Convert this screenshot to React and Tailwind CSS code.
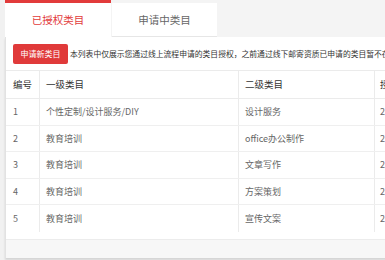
const ROWS = [
  { id: 1, first: '个性定制/设计服务/DIY', second: '设计服务', date: '2019-03-12 10:21:08' },
  { id: 2, first: '教育培训', second: 'office办公制作', date: '2019-03-12 10:21:08' },
  { id: 3, first: '教育培训', second: '文章写作', date: '2019-03-12 10:21:08' },
  { id: 4, first: '教育培训', second: '方案策划', date: '2019-03-12 10:21:08' },
  { id: 5, first: '教育培训', second: '宣传文案', date: '2019-03-12 10:21:08' },
];

const GRID = 'grid grid-cols-[34px_199px_136px_160px]';

export default function App() {
  return (
    <div className="w-[385px] h-[260px] overflow-hidden bg-[#f1f1f1] pl-[5px] font-['Noto_Sans_CJK_SC','Liberation_Sans',sans-serif]">
      {/* Tabs */}
      <div className="flex h-[37px] bg-[#f4f4f4]">
        <div className="w-[106px] bg-white border-t-[3px] border-[#e23b3b] text-[#e23b3b] text-[10.5px] flex items-center justify-center">
          已授权类目
        </div>
        <div className="ml-[1px] mt-[3px] w-[105px] bg-white border-b border-[#e6e6e6] text-[#666] text-[10.5px] flex items-center justify-center">
          申请中类目
        </div>
      </div>

      {/* Panel */}
      <div className="w-[420px] bg-white border-l border-[#e2e2e2] shadow-[0_2px_2px_rgba(0,0,0,0.12)]">
        <div className="flex items-center gap-[2px] pl-[7px] pt-[7px]">
          <button className="w-[55px] h-[20px] bg-[#e03a3a] text-white text-[8px] rounded-[2px] shrink-0">
            申请新类目
          </button>
          <p className="text-[7.8px] text-[#333] whitespace-nowrap">
            本列表中仅展示您通过线上流程申请的类目授权，之前通过线下邮寄资质已申请的类目暂不在此展示。
          </p>
        </div>

        {/* Table */}
        <div className="mt-[6px] border-t border-[#ebebeb]">
          <div className={`${GRID} h-[28px] border-b border-[#ebebeb] text-[9.5px] text-[#333]`}>
            <div className="flex items-center pl-[7px] border-r border-[#ebebeb]">编号</div>
            <div className="flex items-center pl-[6px] border-r border-[#ebebeb]">一级类目</div>
            <div className="flex items-center pl-[6px] border-r border-[#ebebeb]">二级类目</div>
            <div className="flex items-center pl-[5px] whitespace-nowrap">授权时间</div>
          </div>
          {ROWS.map((row, i) => (
            <div
              key={row.id}
              className={`${GRID} h-[26.5px] text-[9px] text-[#666] ${i < ROWS.length - 1 ? 'border-b border-[#efefef]' : ''}`}
            >
              <div className="flex items-center pl-[7px] border-r border-[#ebebeb]">{row.id}</div>
              <div className="flex items-center pl-[6px] border-r border-[#ebebeb]">{row.first}</div>
              <div className="flex items-center pl-[6px] border-r border-[#ebebeb]">{row.second}</div>
              <div className="flex items-center pl-[5px] whitespace-nowrap">{row.date}</div>
            </div>
          ))}
        </div>

        {/* Footer */}
        <div className="mt-[7px] h-[19px] bg-[#f7f7f7] border-t border-[#ececec]" />
      </div>
    </div>
  );
}
